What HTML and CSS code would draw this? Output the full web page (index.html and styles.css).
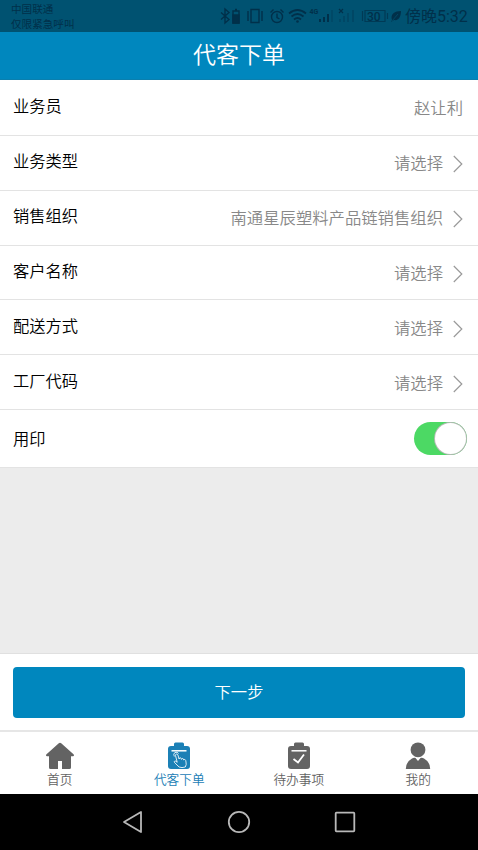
FILE: index.html
```html
<!DOCTYPE html>
<html lang="zh-CN">
<head>
<meta charset="utf-8">
<title>代客下单</title>
<link rel="stylesheet" href="styles.css">
</head>
<body>
<div class="status">
  <div class="carrier"><span>中国联通</span><span>仅限紧急呼叫</span></div>
  <svg class="status-icons" width="186" height="32" viewBox="218 0 186 32" fill="none" stroke="currentColor" stroke-width="1.4">
    <path d="M221 12.500l8 7-4 3.500V9l4 3.500-8 7"/>
    <path d="M233 11h6v12h-6zM235 9.500h2"/><path d="M233 15h6v8h-6z" fill="currentColor"/>
    <path d="M251 9.500h8v13h-8zM248 11v10M262 11v10"/>
    <circle cx="277" cy="17" r="5.500"/><path d="M277 13.500v4l2.500 1.500M270.500 12.500l3-3M283.500 12.500l-3-3"/>
    <path d="M289 13.500q8.500-7 17 0M291.500 16.500q6-5 12 0M294 19.500q3.500-3 7 0" stroke-width="1.800"/><circle cx="297.500" cy="21.500" r="1.300" fill="currentColor" stroke="none"/>
    <path d="M320 22v-3M324 22v-5M328 22v-8" stroke-width="2"/><path d="M332 22V10" stroke-width="2" opacity=".25"/>
    <text x="309.500" y="14" class="network">4G</text>
    <path d="M339 9l4 4M343 9l-4 4" stroke-width="1.200"/>
    <path d="M340 22v-3M344 22v-6M348 22V13M353 22V10" stroke-width="2" opacity=".3"/>
    <path d="M365 10.500h20v11h-20zM387.500 13v6M362.500 11v10" stroke-width="1.200" opacity=".7"/>
    <text x="367" y="21" class="battery">30</text>
    <path d="M392 20c-2-6 3-9 9-9 0 5-2 10-7 9l-3 2z" fill="currentColor" stroke="none"/><path d="M392 21l6-7" stroke="#005271" stroke-width=".7"/>
  </svg>
  <span class="time">傍晚5:32</span>
</div>
<header class="title">代客下单</header>
<main class="form">
  <div class="row"><span class="label">业务员</span><span class="value">赵让利</span></div>
  <div class="row"><span class="label">业务类型</span><span class="value">请选择</span><svg class="chevron" viewBox="0 0 10 18"><path d="M.8 1l8 8-8 8"/></svg></div>
  <div class="row"><span class="label">销售组织</span><span class="value">南通星辰塑料产品链销售组织</span><svg class="chevron" viewBox="0 0 10 18"><path d="M.8 1l8 8-8 8"/></svg></div>
  <div class="row"><span class="label">客户名称</span><span class="value">请选择</span><svg class="chevron" viewBox="0 0 10 18"><path d="M.8 1l8 8-8 8"/></svg></div>
  <div class="row"><span class="label">配送方式</span><span class="value">请选择</span><svg class="chevron" viewBox="0 0 10 18"><path d="M.8 1l8 8-8 8"/></svg></div>
  <div class="row"><span class="label">工厂代码</span><span class="value">请选择</span><svg class="chevron" viewBox="0 0 10 18"><path d="M.8 1l8 8-8 8"/></svg></div>
  <div class="row row-switch"><span class="label">用印</span><span class="switch"><span class="knob"></span></span></div>
</main>
<div class="action"><div class="next">下一步</div></div>
<nav class="tabs">
  <div class="tab">
    <svg width="30" height="28" viewBox="0 0 30 28" fill="currentColor"><path d="M13.800 1.200q1.200-1 2.400 0L28.500 12.300q1.200 1.700-.6 1.900H26V25.500q0 1.500-1.500 1.500H17v-8h-4v8H5.500Q4 27 4 25.500V14.200H2.100q-1.800-.2-.6-1.900z"/></svg>
    <span>首页</span>
  </div>
  <div class="tab active">
    <svg width="30" height="28" viewBox="0 0 30 28"><rect x="4" y="4" width="22" height="23" rx="3" fill="currentColor"/><path d="M7.500 8.800h15" stroke="#fff" stroke-width="1.500"/><path d="M10 7V2q0-1.500 1.500-1.500h7Q20 .5 20 2v5z" fill="currentColor"/><path d="M13.200 20.300L11.500 13.500q0-1.500 1.100-1.500 1 0 1.300 1l1.200 4q.2-1.300 1.200-1.200 1 .1 1.200 1.600.3-1.100 1.200-.9.900.2 1.100 1.500.5-.8 1.300-.4.700.4.900 2.400l.2 2.500-.9 2.500q-3.500 1.200-6.200 0l-4.500-4.300q-.8-1.200.2-1.700.8-.4 2.400 1.300M10.300 14.500q-1.300-2.500.5-3.900 2.500-1.200 3.800.9" fill="none" stroke="#fff" stroke-width=".85" stroke-linejoin="round"/></svg>
    <span>代客下单</span>
  </div>
  <div class="tab">
    <svg width="30" height="28" viewBox="0 0 30 28"><rect x="4" y="4" width="22" height="23" rx="3" fill="currentColor"/><path d="M7.500 8.800h15" stroke="#fff" stroke-width="1.500"/><path d="M10 7V2q0-1.500 1.500-1.500h7Q20 .5 20 2v5z" fill="currentColor"/><path d="M9.500 17l4.500 3.500 6-8" fill="none" stroke="#fff" stroke-width="1.800"/></svg>
    <span>待办事项</span>
  </div>
  <div class="tab">
    <svg width="30" height="28" viewBox="0 0 30 28" fill="currentColor"><circle cx="15" cy="7.800" r="7.400"/><path d="M2.800 27q0-7 6.200-10.500 2-1.200 3.500-.5L15 19l2.500-3q1.500-.7 3.500.5Q27.200 20 27.200 27z"/></svg>
    <span>我的</span>
  </div>
</nav>
<div class="system">
  <svg width="24" height="24" viewBox="0 0 24 24"><path d="M3 12L20 2v20z"/></svg>
  <svg width="24" height="24" viewBox="0 0 24 24"><circle cx="12" cy="12" r="10.200"/></svg>
  <svg width="24" height="24" viewBox="0 0 24 24"><rect x="2.700" y="2.700" width="18.600" height="18.600" rx=".7"/></svg>
</div>
</body>
</html>
```
FILE: styles.css
```css
* { box-sizing: border-box; }
body {
  margin: 0;
  height: 850px;
  display: flex;
  flex-direction: column;
  overflow: hidden;
  background: #ececec;
  font-family: "Noto Sans CJK SC", sans-serif;
  font-weight: 350;
}
.status {
  height: 32px;
  flex: none;
  display: flex;
  background: #005271;
  color: #00304a;
}
.carrier {
  width: 218px;
  padding: 2px 0 0 11px;
  display: flex;
  flex-direction: column;
  font-size: 10.6px;
  line-height: 14.5px;
  font-weight: 400;
}
.status-icons { flex: none; }
.network { font: bold 7px Roboto, sans-serif; fill: currentColor; stroke: none; }
.battery { font: 500 12px Roboto, sans-serif; fill: currentColor; stroke: none; }
.time {
  margin-left: 1px;
  font-family: Roboto, "Noto Sans CJK SC", sans-serif;
  font-size: 16px;
  line-height: 33px;
  font-weight: 400;
  white-space: nowrap;
}
.title {
  height: 48px;
  flex: none;
  background: #0087be;
  border-bottom: 1px solid #0a7fae;
  color: #fff;
  font-size: 23px;
  line-height: 42px;
  text-align: center;
}
.form { flex: none; background: #fff; }
.row {
  height: 54.8px;
  padding: 0 15px 1px 13px;
  display: flex;
  align-items: center;
  border-bottom: 1px solid #e3e3e3;
  font-size: 16.35px;
}
.row:first-child { height: 56px; }
.label {
  flex: 1;
  padding-bottom: 4px;
  color: #000;
  font-size: 16.25px;
}
.value { color: #888; }
.chevron {
  width: 10px;
  height: 18px;
  margin: 4px 0 0 10px;
  fill: none;
  stroke: #999;
  stroke-width: 1.2;
}
.row-switch { height: 58px; padding: 0 11px 0 13px; }
.row-switch .label { padding-bottom: 0; }
.switch {
  width: 53px;
  height: 33px;
  padding: 1px;
  display: flex;
  justify-content: flex-end;
  border-radius: 17px;
  background: #4cd964;
}
.knob {
  width: 31px;
  height: 31px;
  border-radius: 50%;
  background: #fff;
  box-shadow: 0 0 0 1px #b2bab3;
}
.action {
  height: 77px;
  flex: none;
  margin-top: auto;
  padding: 13px;
  border-top: 1px solid #e0e0e0;
  background: #fff;
}
.next {
  height: 51px;
  border-radius: 4px;
  background: #0087be;
  color: #fff;
  font-size: 16.3px;
  line-height: 49px;
  text-align: center;
}
.tabs {
  height: 64px;
  flex: none;
  display: flex;
  border-top: 2px solid #e6e6e6;
  background: #fff;
}
.tab {
  flex: 1;
  padding-top: 10px;
  display: flex;
  flex-direction: column;
  align-items: center;
  color: #636363;
  font-size: 12.7px;
  line-height: 18px;
}
.active { color: #1b80b6; }
.system {
  height: 56px;
  flex: none;
  padding: 0 121px;
  display: flex;
  align-items: center;
  justify-content: space-between;
  background: #000;
  fill: none;
  stroke: #b8b8b8;
  stroke-width: 1.8;
  stroke-linejoin: round;
}
```
